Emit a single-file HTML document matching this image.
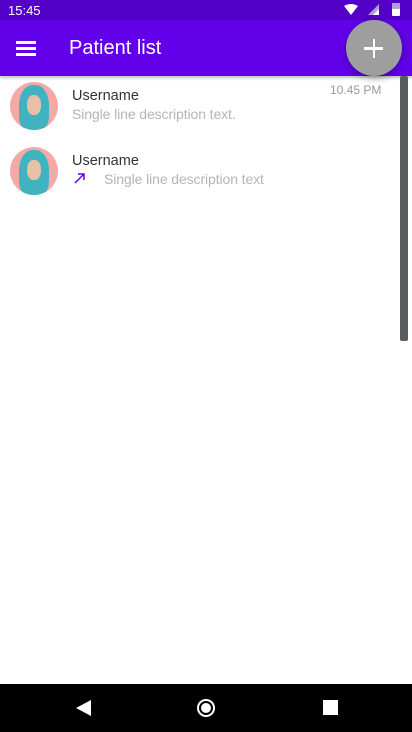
<!DOCTYPE html>
<html><head><meta charset="utf-8"><style>
*{margin:0;padding:0;box-sizing:border-box}
body{width:412px;height:732px;position:relative;overflow:hidden;background:#fff;font-family:"Liberation Sans",sans-serif}
.status{position:absolute;top:0;left:0;width:412px;height:20px;background:#5300c8;color:#fff;font-size:13px}
.app{position:absolute;top:20px;left:0;width:412px;height:56px;background:#6200ea;box-shadow:0 2px 3px rgba(0,0,0,.25)}
.title{position:absolute;left:69px;top:17px;color:#fff;font-size:20px}
.ham{position:absolute;left:16px;width:20px;height:2.5px;background:#fff}
.fab{position:absolute;left:346px;top:20px;width:56px;height:56px;border-radius:50%;background:#9e9e9e;box-shadow:0 2px 8px rgba(0,0,0,.35)}
.av{position:absolute;left:10px;width:48px;height:48px;border-radius:50%;background:#f5a9a6;overflow:hidden}
.hair{position:absolute;left:9px;top:3px;width:30px;height:45px;background:#3fb3c0;border-radius:45% 45% 30% 30%}
.face{position:absolute;left:17px;top:13px;width:14px;height:20px;background:#e8c0a8;border-radius:45%}
.name{position:absolute;left:72px;font-size:14.5px;color:#333}
.desc{position:absolute;font-size:14px;color:#b4b4b4;letter-spacing:-0.1px}
.nav{position:absolute;top:684px;left:0;width:412px;height:48px;background:#000}
</style></head><body>
<div class="status"><span style="position:absolute;left:8px;top:3px">15:45</span>
<svg style="position:absolute;left:344px;top:4px" width="14" height="12"><path d="M0 2 Q7 -2 14 2 L7 11Z" fill="#fff"/></svg>
<svg style="position:absolute;left:368px;top:4px" width="11" height="12"><path d="M11 0 V11 H0Z" fill="#b39ddb"/><path d="M11 5 V11 H5Z" fill="#fff"/></svg>
<div style="position:absolute;left:392px;top:3px;width:8px;height:13px;background:#fff;border-radius:1px"></div>
<div style="position:absolute;left:392px;top:3px;width:8px;height:6px;background:#b39ddb;border-radius:1px"></div>
</div>
<div class="app">
<div class="ham" style="top:21px"></div><div class="ham" style="top:27px"></div><div class="ham" style="top:33px"></div>
<div class="title">Patient list</div>
</div>
<div class="fab"><div style="position:absolute;left:18px;top:27px;width:19px;height:2.5px;background:#fff"></div><div style="position:absolute;left:26.5px;top:19px;width:2.5px;height:19px;background:#fff"></div></div>
<div class="av" style="top:82px"><div class="hair"></div><div class="face"></div></div>
<div class="name" style="top:88px">Username</div>
<div class="desc" style="left:72px;top:106px">Single line description text.</div>
<div style="position:absolute;left:330px;top:83px;font-size:12px;color:#999">10.45 PM</div>
<div class="av" style="top:147px"><div class="hair"></div><div class="face"></div></div>
<div class="name" style="top:153px">Username</div>
<svg style="position:absolute;left:74px;top:172px" width="12" height="12"><path d="M1 11 L10 2 M4 2 H10 V8" stroke="#6200ea" stroke-width="1.5" fill="none"/></svg>
<div class="desc" style="left:104px;top:171px">Single line description text</div>
<div style="position:absolute;left:400px;top:76px;width:8px;height:265px;background:#5a5d60;border-radius:2px"></div>
<div class="nav">
<svg style="position:absolute;left:76px;top:16px" width="16" height="16"><path d="M15 0 V16 L0 8Z" fill="#fff"/></svg>
<div style="position:absolute;left:197px;top:15px;width:18px;height:18px;border-radius:50%;border:2px solid #fff"><div style="position:absolute;left:2px;top:2px;width:10px;height:10px;border-radius:50%;background:#fff"></div></div>
<div style="position:absolute;left:323px;top:16px;width:15px;height:15px;background:#fff"></div>
</div>
</body></html>
